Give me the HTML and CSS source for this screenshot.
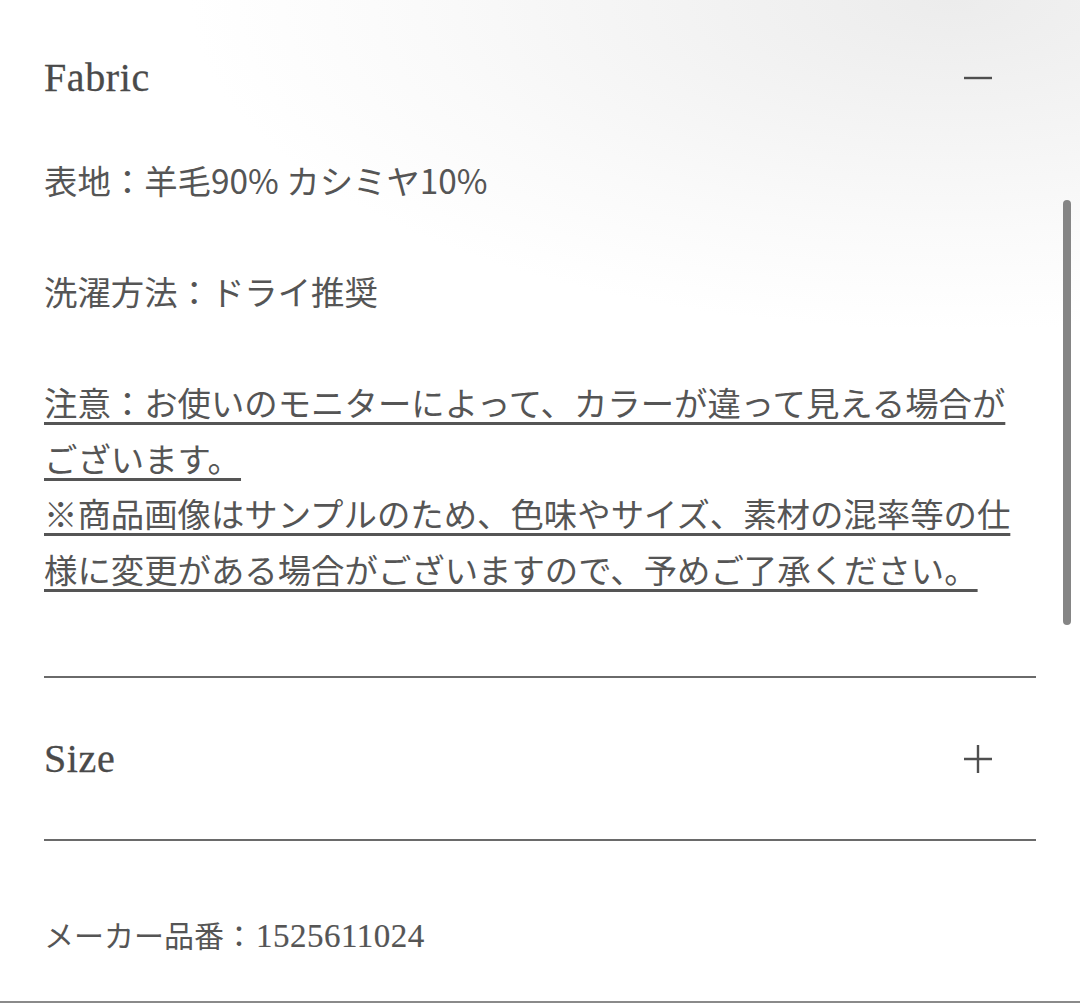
FILE: index.html
```html
<!DOCTYPE html>
<html lang="ja">
<head>
<meta charset="utf-8">
<title>Fabric</title>
<link rel="stylesheet" href="styles.css">
</head>
<body>
<div class="screen">
  <div class="page">
    <section class="acc acc-open">
      <div class="acc-head">
        <h2 class="acc-title">Fabric</h2>
        <svg class="acc-icon" width="28" height="28" viewBox="0 0 28 28"><path d="M0 14H28" stroke="#4f4f4f" stroke-width="2.4" fill="none"/></svg>
      </div>
      <div class="acc-body">
        <p class="acc-text">表地：羊毛90% カシミヤ10%<br><br>洗濯方法：ドライ推奨<br><br><span class="note">注意：お使いのモニターによって、カラーが違って見える場合がございます。<br>※商品画像はサンプルのため、色味やサイズ、素材の混率等の仕様に変更がある場合がございますので、予めご了承ください。</span></p>
      </div>
    </section>
    <section class="acc">
      <div class="acc-head acc-head-closed">
        <h2 class="acc-title">Size</h2>
        <svg class="acc-icon" width="28" height="28" viewBox="0 0 28 28"><path d="M0 14H28M14 0V28" stroke="#4f4f4f" stroke-width="2.4" fill="none"/></svg>
      </div>
    </section>
    <p class="maker">メーカー品番：<span class="maker-num">1525611024</span></p>
  </div>
  <div class="bottom-rule"></div>
  <div class="scrollbar"></div>
</div>
</body>
</html>
```
FILE: styles.css
```css
html, body {
  margin: 0;
  padding: 0;
  height: 100%;
  overflow: hidden;
}
body {
  background: #ffffff;
  color: #555555;
  font-family: "Noto Sans CJK JP", "Noto Sans", sans-serif;
}
.screen {
  position: relative;
  width: 1080px;
  height: 1003px;
  background:
    radial-gradient(ellipse 760px 330px at 88% 0%, #ececec 0%, #f3f3f3 35%, #fafafa 70%, rgba(255,255,255,0) 100%),
    #ffffff;
}
.page {
  padding: 0 44px;
  height: 1001px;
  box-sizing: border-box;
}
.acc-head {
  display: flex;
  align-items: center;
  justify-content: space-between;
  padding-top: 50px;
  height: 56px;
  padding-right: 44px;
}
.acc-head-closed {
  padding-top: 0;
  height: 161px;
  border-bottom: 2px solid #6a6a6a;
}
.acc-title {
  margin: 0;
  font-family: "Liberation Serif", "Times New Roman", serif;
  font-weight: 400;
  font-size: 40px;
  line-height: 56px;
  color: #4a4a4a;
  letter-spacing: 0.6px;
  -webkit-text-stroke: 0.3px #4a4a4a;
}
.acc-icon {
  display: block;
  flex: none;
}
.acc-body {
  padding-top: 46px;
  padding-bottom: 80px;
  border-bottom: 2px solid #6a6a6a;
}
.acc-text {
  margin: 0;
  font-size: 33.4px;
  line-height: 55.5px;
  color: #555555;
}
.note {
  text-decoration: underline;
  text-decoration-thickness: 2.5px;
  text-underline-offset: 6px;
  text-decoration-color: #555555;
}
.maker {
  margin: 67px 0 0;
  font-family: "Liberation Serif", "Noto Sans CJK JP", serif;
  font-size: 30px;
  line-height: 56px;
  color: #555555;
}
.maker-num {
  font-size: 33px;
  letter-spacing: 0.5px;
  margin-left: 2px;
  -webkit-text-stroke: 0.2px #555555;
}
.bottom-rule {
  height: 2px;
  background: #8a8a8a;
}
.scrollbar {
  position: absolute;
  top: 200px;
  right: 9px;
  width: 8px;
  height: 425px;
  border-radius: 4px;
  background: #858585;
}
```
